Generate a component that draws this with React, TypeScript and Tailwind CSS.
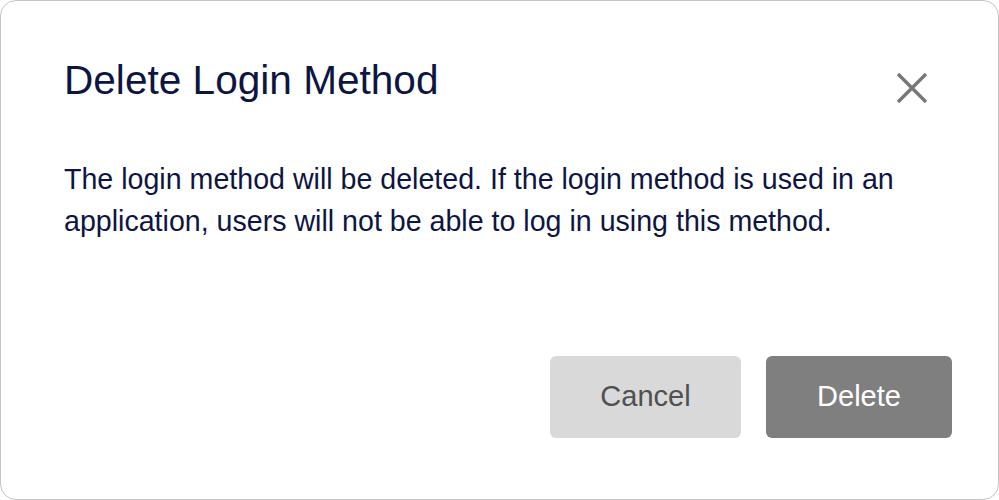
export default function App() {
  return (
    <div className="w-[999px] h-[500px] bg-white" style={{ fontFamily: "'Liberation Sans', Arial, sans-serif" }}>
      <div className="flex h-full flex-col rounded-[16px] border border-[#c4c4c4] bg-white pl-[63px] pr-[46px] pt-[56px] pb-[61px]">
        {/* Header */}
        <div className="flex items-start justify-between">
          <h2 className="text-[40.6px] leading-[46px] text-[#0d1544]">Delete Login Method</h2>
          <button aria-label="Close" className="mr-[23px] mt-[14px] text-[#767676]">
            <svg width="34" height="34" viewBox="0 0 34 34" fill="none" stroke="currentColor" strokeWidth="3.2">
              <path d="M3 3 31 31M31 3 3 31" />
            </svg>
          </button>
        </div>

        {/* Body */}
        <p className="mt-[54px] pr-[40px] text-[28.6px] leading-[41.5px] text-[#0d1544]">
          The login method will be deleted. If the login method is used in an application, users will not be able to log in using this method.
        </p>

        {/* Actions */}
        <div className="mt-auto flex justify-end gap-[25px]">
          <button className="h-[82px] w-[191px] rounded-[6px] bg-[#d9d9d9] text-[29px] text-[#505050]">Cancel</button>
          <button className="h-[82px] w-[186px] rounded-[6px] bg-[#7f7f7f] text-[29px] text-white">Delete</button>
        </div>
      </div>
    </div>
  );
}
